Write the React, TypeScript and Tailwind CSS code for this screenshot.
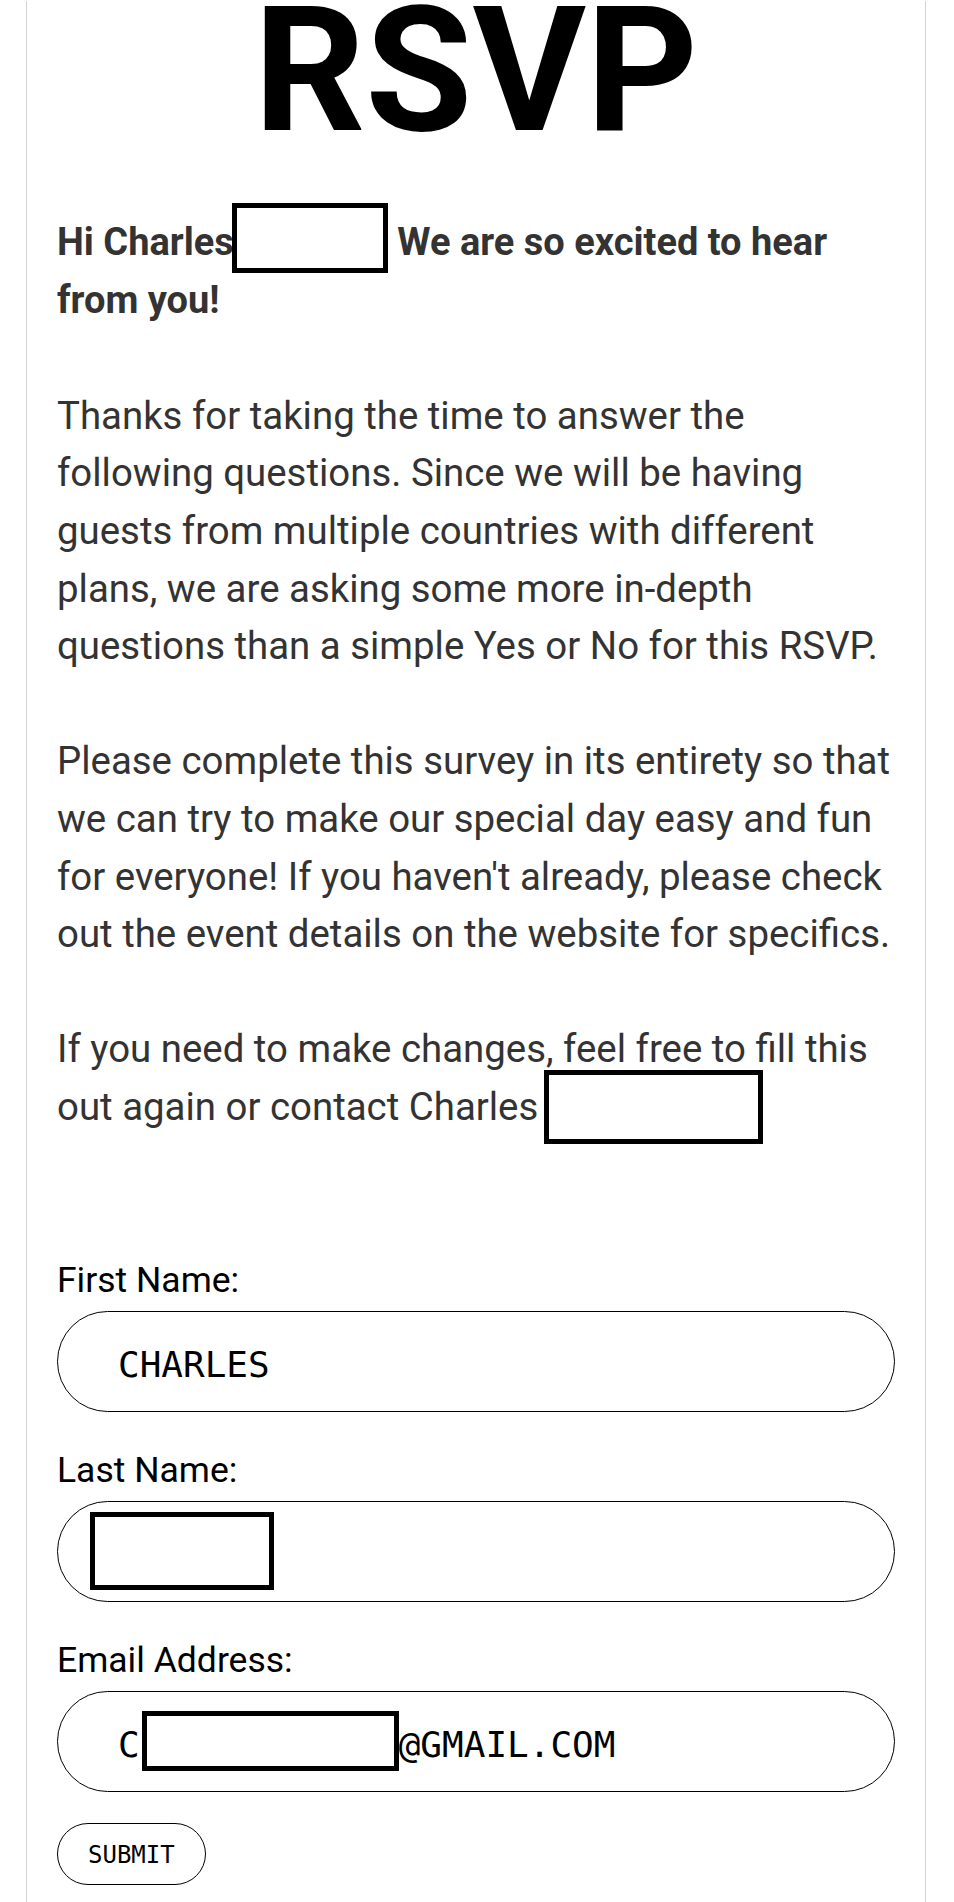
import React from "react";

function Redact({ w, h, top, ml }: { w: string; h: string; top: string; ml: string }) {
  return (
    <span className={`relative inline-block h-0 align-baseline ${w} ${ml}`}>
      <span className={`absolute left-0 border-[5px] border-black ${w} ${h} ${top}`} />
    </span>
  );
}

export default function App() {
  return (
    <div className="min-h-[1902px] w-[954px] bg-white font-['Roboto',sans-serif]">
      <div className="ml-[26px] min-h-[1902px] w-[900px] border-x border-[#d2d2d2] px-[30px]">
        <h1 className="mt-[1px] text-center text-[174px] font-bold leading-[140px] text-black">RSVP</h1>

        <div className="mt-[73px] text-[38.4px] leading-[57.6px] text-[#333333]">
          <p className="text-[38px] font-bold">
            Hi Charles
            <Redact w="w-[156px]" h="h-[70px]" top="top-[-52px]" ml="ml-[-2px]" /> We are so excited to hear from
            you!
          </p>
          <p className="mt-[57.6px]">
            Thanks for taking the time to answer the following questions. Since we will be having guests from
            multiple countries with different plans, we are asking some more in-depth questions than a simple Yes or
            No for this RSVP.
          </p>
          <p className="mt-[57.6px]">
            Please complete this survey in its entirety so that we can try to make our special day easy and fun for
            everyone! If you haven't already, please check out the event details on the website for specifics.
          </p>
          <p className="mt-[57.6px]">
            If you need to make changes, feel free to fill this out again or contact Charles
            <Redact w="w-[219px]" h="h-[74px]" top="top-[-50px]" ml="ml-[6px]" />
          </p>
        </div>

        <form className="mt-[123px] w-full" onSubmit={(e) => e.preventDefault()}>
          <div className="mb-[37px]">
            <label className="block text-[35.5px] leading-[42px] text-black">First Name:</label>
            <div className="mt-[10px] flex h-[101px] items-center rounded-full border border-black pl-[60px] font-['DejaVu_Sans_Mono',monospace] text-[36px] text-black">
              <span className="pt-[7px]">CHARLES</span>
            </div>
          </div>

          <div className="mb-[37px]">
            <label className="block text-[35.5px] leading-[42px] text-black">Last Name:</label>
            <div className="relative mt-[10px] flex h-[101px] items-center rounded-full border border-black pl-[60px] font-['DejaVu_Sans_Mono',monospace] text-[36px] text-black">
              <span className="absolute left-[32px] top-[10px] h-[78px] w-[184px] border-[5px] border-black" />
            </div>
          </div>

          <div className="mb-[31px]">
            <label className="block text-[35.5px] leading-[42px] text-black">Email Address:</label>
            <div className="mt-[10px] flex h-[101px] items-center rounded-full border border-black pl-[60px] font-['DejaVu_Sans_Mono',monospace] text-[36px] text-black">
              <span className="pt-[7px]">C</span>
              <span className="ml-[2px] inline-block h-[60px] w-[257px] border-[5px] border-black" />
              <span className="pt-[7px]">@GMAIL.COM</span>
            </div>
          </div>

          <button
            type="submit"
            className="flex h-[62px] items-center rounded-full border border-black bg-white px-[30px] pt-[3px] font-['DejaVu_Sans_Mono',monospace] text-[24px] text-black"
          >
            SUBMIT
          </button>
        </form>
      </div>
    </div>
  );
}
